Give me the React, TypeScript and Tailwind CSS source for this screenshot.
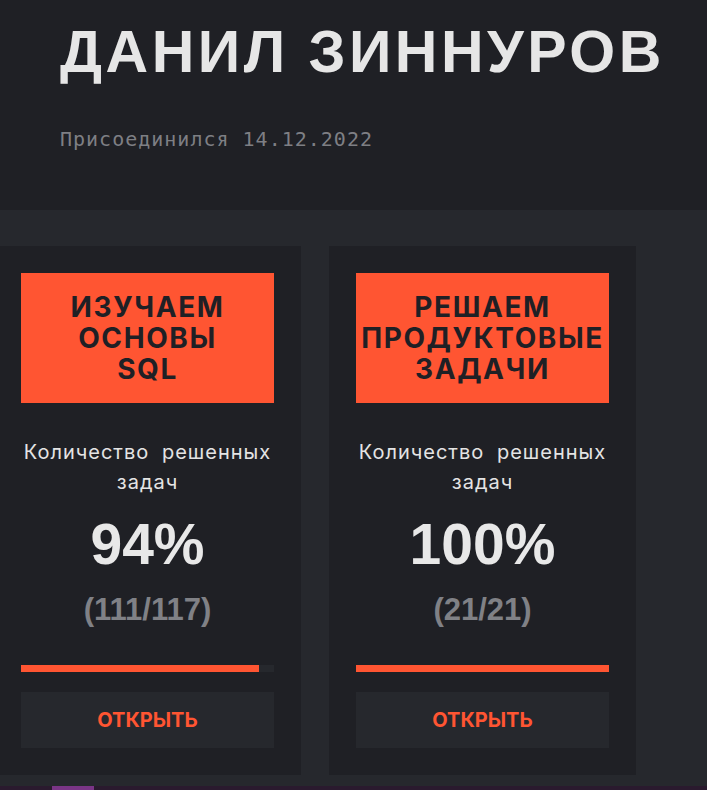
import React from 'react';

const courses = [
  { title: ['Изучаем', 'основы', 'SQL'], done: 111, total: 117 },
  { title: ['Решаем', 'продуктовые', 'задачи'], done: 21, total: 21 },
];

const CourseCard = ({ title, done, total }: { title: string[]; done: number; total: number }) => {
  const pct = Math.floor((done / total) * 100);
  return (
    <div className="w-[307px] shrink-0 bg-[#1f2025] p-[27px] flex flex-col font-['Inter',sans-serif]">
      <div className="h-[130px] bg-[#ff5532] flex flex-col items-center justify-center text-[#1f2025] font-bold uppercase text-[28px] leading-[31px] tracking-[1.6px] text-center whitespace-nowrap">
        {title.map((t) => (
          <span key={t}>{t}</span>
        ))}
      </div>
      <p className="mt-[34px] text-center text-[#e4e4e4] text-[20px] leading-[30px] tracking-[1px] [word-spacing:6px]">
        Количество решенных задач
      </p>
      <div className="mt-[17px] text-center text-[#e8e8e8] font-bold text-[57px] leading-[60px] font-['Liberation_Sans',sans-serif]">
        {pct}%
      </div>
      <div className="mt-[18px] text-center text-[#808186] font-bold text-[31px] leading-[36px] font-['Liberation_Sans',sans-serif]">
        ({done}/{total})
      </div>
      <div className="mt-[37px] h-[7px] bg-[#26282d]">
        <div className="h-full bg-[#ff5532]" style={{ width: `${pct}%` }} />
      </div>
      <button className="mt-[20px] h-[56px] bg-[#26282d] text-[#ff5532] font-bold text-[20px] uppercase">
        Открыть
      </button>
    </div>
  );
};

export default function App() {
  return (
    <div className="w-[707px] h-[790px] overflow-hidden bg-[#26282d] flex flex-col">
      <header className="h-[210px] shrink-0 bg-[#1f2025] pl-[60px] pt-[20px]">
        <h1 className="font-['Liberation_Sans',sans-serif] font-bold text-[59px] leading-[64px] tracking-[3.5px] text-[#e6e6e6] uppercase whitespace-nowrap">
          Данил Зиннуров
        </h1>
        <p className="mt-[40px] font-['DejaVu_Sans_Mono',monospace] text-[20px] tracking-[1px] text-[#7e7f84]">
          Присоединился 14.12.2022
        </p>
      </header>
      <section className="flex-1 pt-[36px] overflow-hidden">
        <div className="flex gap-[28px] ml-[-6px]">
          {courses.map((c) => (
            <CourseCard key={c.title.join(' ')} {...c} />
          ))}
        </div>
      </section>
      <div className="h-[4px] shrink-0 bg-[#2a1a2e] flex">
        <div className="ml-[52px] w-[42px] bg-[#7a3586]" />
      </div>
    </div>
  );
}
